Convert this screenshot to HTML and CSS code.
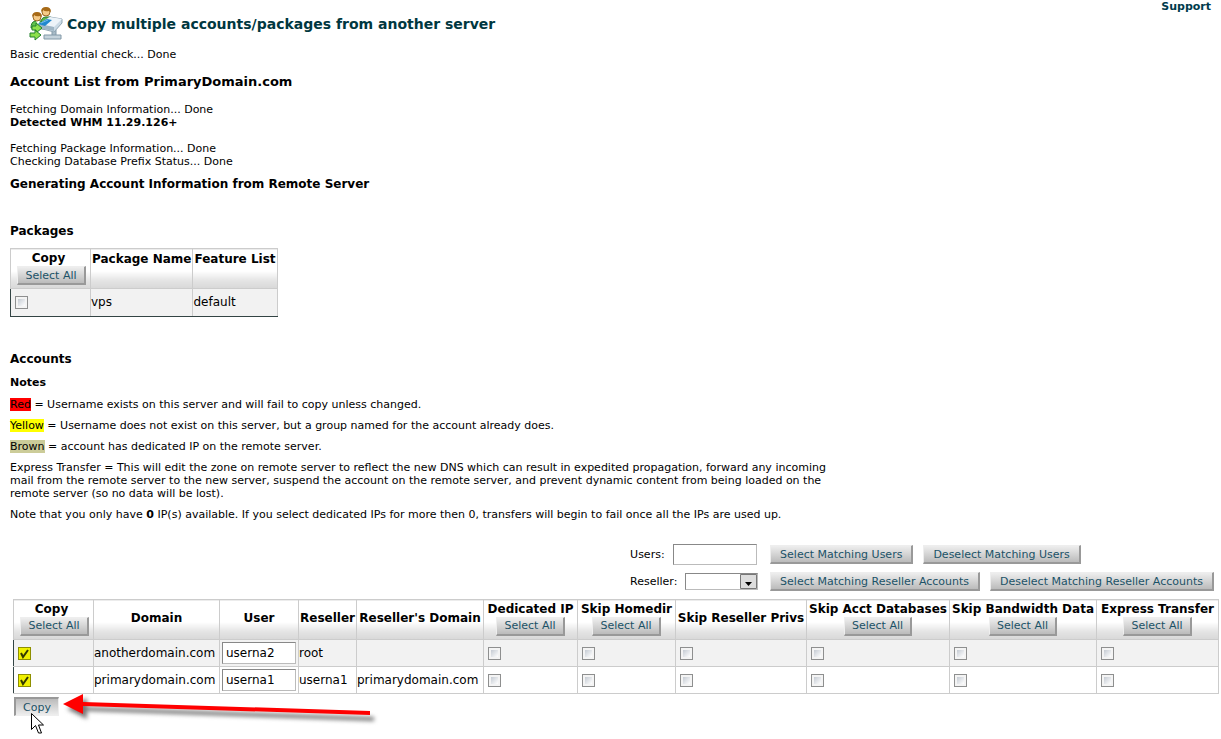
FILE: index.html
```html
<!DOCTYPE html>
<html lang="en">

<head>
    <meta charset="utf-8">
    <title>Copy multiple accounts/packages from another server</title>
    <link rel="stylesheet" href="styles.css">
</head>

<body>
    <div id="header">
        <h1>
            <svg class="logo" width="34" height="34" viewBox="0 0 34 34" aria-hidden="true">
                <path d="M12 16q0-6 5-6h4q5 1 5 7z" fill="#58b947" stroke="#25762a"/>
                <path d="M2 21q0-6 4-7h6q4 1 4 8z" fill="#62c34e" stroke="#25762a"/>
                <path d="M7 14l2 4 2-4z" fill="#fff"/>
                <circle cx="17" cy="5" r="4" fill="#f5ca87" stroke="#9b6925"/>
                <path d="M12 5q0-5 5-5t5 5l-2-1q-4 1-6-1z" fill="#a76a17"/>
                <circle cx="8" cy="10" r="4" fill="#f5ca87" stroke="#9b6925"/>
                <path d="M3 10q0-5 5-5t5 5l-2-1q-4 1-6-1z" fill="#a76a17"/>
                <path d="M23 23h4v6h-4z" fill="#a9bcc8" stroke="#8299a8"/>
                <path d="M15 28h17v4H15z" fill="#c5d3dc" stroke="#8299a8"/>
                <path d="M10 17l11-7 12 2v4l-8 9-15-4z" fill="#cbdbe6" stroke="#91a6b4"/>
                <path d="M10 17l11-7 12 2-8 8z" fill="#edf4f9"/>
                <path d="M10 17l15 3v4l-15-3z" fill="#9fb6c5"/>
                <path d="M9 17l9-5 5 1-7 6z" fill="#2088cf"/>
                <path d="M12 16l7-3" stroke="#75bde9"/>
                <path d="M3 19h4v-3l6 5-6 5v-3H3z" fill="#8de04c" stroke="#23802d"/>
                <path d="M1 26h5v-3l6 5-6 5v-3H1z" fill="#8de04c" stroke="#23802d"/>
            </svg>
            Copy multiple accounts/packages from another server
        </h1>
        <a class="support" href="#">Support</a>
    </div>

    <div class="content">
        <div>Basic credential check... Done</div>
        <h2>Account List from PrimaryDomain.com</h2>
        <p class="log">
            Fetching Domain Information... Done<br>
            <b>Detected WHM 11.29.126+</b><br>
            <br>
            Fetching Package Information... Done<br>
            Checking Database Prefix Status... Done
        </p>
        <h3>Generating Account Information from Remote Server</h3>

        <h3 class="section">Packages</h3>
        <table class="packages">
            <tr>
                <th class="copy">Copy<br><button type="button">Select All</button></th>
                <th>Package Name</th>
                <th>Feature List</th>
            </tr>
            <tr class="odd">
                <td><input type="checkbox" aria-label="Copy vps"></td>
                <td>vps</td>
                <td>default</td>
            </tr>
        </table>

        <h3 class="accounts-title">Accounts</h3>
        <div class="notes">
            <h4>Notes</h4>
            <p><span class="red">Red</span> = Username exists on this server and will fail to copy unless changed.</p>
            <p><span class="yellow">Yellow</span> = Username does not exist on this server, but a group named for the account already does.</p>
            <p><span class="brown">Brown</span> = account has dedicated IP on the remote server.</p>
            <p>Express Transfer = This will edit the zone on remote server to reflect the new DNS which can result in expedited propagation, forward any incoming mail from the remote server to the new server, suspend the account on the remote server, and prevent dynamic content from being loaded on the remote server (so no data will be lost).</p>
            <p>Note that you only have <b>0</b> IP(s) available. If you select dedicated IPs for more then 0, transfers will begin to fail once all the IPs are used up.</p>
        </div>
    </div>

    <form class="accounts-form">
        <div class="filters">
            <div class="filter">
                <div class="field">
                    <label for="users">Users:</label>
                    <input type="text" id="users">
                </div>
                <button type="button">Select Matching Users</button>
                <button type="button">Deselect Matching Users</button>
            </div>
            <div class="filter">
                <div class="field">
                    <label for="reseller">Reseller:</label>
                    <select id="reseller">
                        <option></option>
                    </select>
                </div>
                <button type="button">Select Matching Reseller Accounts</button>
                <button type="button">Deselect Matching Reseller Accounts</button>
            </div>
        </div>

        <table class="accounts">
            <colgroup>
                <col class="c-copy">
                <col class="c-domain">
                <col class="c-user">
                <col class="c-reseller">
                <col class="c-resdomain">
                <col class="c-ip">
                <col class="c-homedir">
                <col class="c-privs">
                <col class="c-databases">
                <col class="c-bandwidth">
                <col class="c-express">
            </colgroup>
            <tr>
                <th class="copy">Copy<br><button type="button">Select All</button></th>
                <th>Domain</th>
                <th>User</th>
                <th>Reseller</th>
                <th>Reseller's Domain</th>
                <th>Dedicated IP<br><button type="button">Select All</button></th>
                <th>Skip Homedir<br><button type="button">Select All</button></th>
                <th>Skip Reseller Privs</th>
                <th>Skip Acct Databases<br><button type="button">Select All</button></th>
                <th>Skip Bandwidth Data<br><button type="button">Select All</button></th>
                <th>Express Transfer<br><button type="button">Select All</button></th>
            </tr>
            <tr class="odd">
                <td><input type="checkbox" aria-label="Copy anotherdomain.com" checked></td>
                <td>anotherdomain.com</td>
                <td><input type="text" aria-label="User for anotherdomain.com" value="userna2"></td>
                <td>root</td>
                <td></td>
                <td><input type="checkbox" aria-label="Dedicated IP"></td>
                <td><input type="checkbox" aria-label="Skip Homedir"></td>
                <td><input type="checkbox" aria-label="Skip Reseller Privs"></td>
                <td><input type="checkbox" aria-label="Skip Acct Databases"></td>
                <td><input type="checkbox" aria-label="Skip Bandwidth Data"></td>
                <td><input type="checkbox" aria-label="Express Transfer"></td>
            </tr>
            <tr>
                <td><input type="checkbox" aria-label="Copy primarydomain.com" checked></td>
                <td>primarydomain.com</td>
                <td><input type="text" aria-label="User for primarydomain.com" value="userna1"></td>
                <td>userna1</td>
                <td>primarydomain.com</td>
                <td><input type="checkbox" aria-label="Dedicated IP"></td>
                <td><input type="checkbox" aria-label="Skip Homedir"></td>
                <td><input type="checkbox" aria-label="Skip Reseller Privs"></td>
                <td><input type="checkbox" aria-label="Skip Acct Databases"></td>
                <td><input type="checkbox" aria-label="Skip Bandwidth Data"></td>
                <td><input type="checkbox" aria-label="Express Transfer"></td>
            </tr>
        </table>

        <div class="submit">
            <button type="submit" class="pressed">Copy</button>
            <svg class="arrow" width="320" height="40" viewBox="0 0 320 40" aria-hidden="true">
                <path d="M3 11l20-11v9l287 10v4L23 13v8z" class="arrow-shadow"/>
                <path d="M3 11L23 1v8l287 9v4L23 13v8z" fill="#f00"/>
            </svg>
            <svg class="cursor" width="13" height="22" viewBox="0 0 13 22" aria-hidden="true">
                <path d="M.5.5v16l4-4 3 7.500h3l-3-8h5z" fill="#fff" stroke="#000"/>
            </svg>
        </div>
    </form>
</body>

</html>
```

FILE: styles.css
```css
body {
    min-height: 100vh;
    margin: 0;
    background-color: #fff;
    color: #000;
    font-family: Verdana, "DejaVu Sans", sans-serif;
    font-size: 11px;
    line-height: 13px;
}

#header {
    display: flex;
    justify-content: space-between;
    padding: 0 10px 0 29px;
}

h1 {
    display: flex;
    align-items: center;
    gap: 4px;
    height: 34px;
    margin: 7px 0;
    color: #003740;
    font-size: 14px;
    line-height: 18px;
}

.support {
    color: #003b4c;
    font-weight: bold;
    text-decoration: none;
}

.content {
    padding: 0 10px;
}

h2 {
    margin: 13px 0;
    font-size: 13px;
    line-height: 16px;
}

h3 {
    margin: 9px 0;
    font-size: 12px;
    line-height: 15px;
}

h4 {
    margin: 9px 0;
    font-size: 11px;
}

p {
    margin: 8px 0;
}

.log {
    margin: 0;
}

.section {
    margin-top: 32px;
}

.accounts-title {
    margin-top: 35px;
}

.notes {
    max-width: 840px;
}

.red {
    background-color: #f00;
}

.yellow {
    background-color: #ff0;
}

.brown {
    background-color: #cc9;
}

/* tables */
table {
    border-collapse: collapse;
    font-size: 12px;
    line-height: 15px;
}

th,
td {
    border: 1px solid #ccc;
    white-space: nowrap;
}

th {
    height: 37px;
    padding: 0 1px 2px;
    background-image: linear-gradient(#fff 55%, #e4e4e4 80%, #d8d8d8);
}

td {
    height: 26px;
    padding: 0;
}

.packages th {
    padding-top: 3px;
    height: 34px;
    vertical-align: top;
}

.copy,
.packages .copy {
    padding-left: 0;
    padding-right: 4px;
}

.packages .copy {
    width: 75px;
    padding-top: 2px;
    height: 35px;
}

.packages td {
    border-bottom-color: #344;
    height: 27px;
}

td:first-child {
    border-left: 1px solid #344;
}

.odd {
    background-color: #f2f2f2;
}

.copy button {
    margin-left: 6px;
}

.accounts {
    width: 100%;
    table-layout: fixed;
}

.c-copy { width: 80px; }
.c-domain { width: 126px; }
.c-user { width: 79px; }
.c-reseller { width: 58px; }
.c-resdomain { width: 127px; }
.c-ip { width: 94px; }
.c-homedir { width: 98px; }
.c-privs { width: 131px; }
.c-databases { width: 143px; }
.c-bandwidth { width: 147px; }
.c-express { width: 122px; }

/* controls */
button {
    height: 19px;
    padding: 0 7px;
    border: 1px solid #eee;
    border-right: 2px solid #999;
    border-bottom: 2px solid #999;
    background-image: linear-gradient(#eee, #bbb);
    color: #1b5267;
    font-family: inherit;
    font-size: 11px;
    line-height: 15px;
    white-space: nowrap;
}

th button {
    display: inline-block;
    vertical-align: top;
}

input[type="text"],
select {
    box-sizing: border-box;
    margin: 0;
    padding: 0 3px;
    border: 1px solid #bbb;
    border-top-color: #888;
    border-left-color: #888;
    border-radius: 0;
    background-color: #fff;
    color: #000;
    font-family: inherit;
    font-size: 12px;
}

td input[type="text"] {
    display: block;
    width: 74px;
    height: 22px;
    margin: 0 2px;
}

input[type="checkbox"] {
    display: block;
    box-sizing: border-box;
    appearance: none;
    width: 13px;
    height: 13px;
    margin: 0 4px;
    border: 1px solid #8e8f8f;
    background: linear-gradient(135deg, #c5cbd3, #fff) content-box, #f4f4f4;
    padding: 2px;
}

input[type="checkbox"]:checked {
    border-color: #8e8f00;
    background: url("data:image/svg+xml,%3Csvg xmlns='http://www.w3.org/2000/svg' viewBox='0 0 11 11'%3E%3Cpath d='M2 5l2 4 5-7' fill='none' stroke='%23343a00' stroke-width='2'/%3E%3C/svg%3E") padding-box, #f0f000;
}

/* accounts form */
.accounts-form {
    margin: 23px 2px 0 13px;
}

.filters {
    display: grid;
    gap: 6px;
    width: fit-content;
    margin-left: auto;
    margin-right: 5px;
    margin-bottom: 7px;
}

.filter {
    display: flex;
    align-items: center;
    gap: 10px;
    min-height: 21px;
}

.filter button {
    padding: 0 9px;
}

.field {
    display: flex;
    align-items: center;
    gap: 8px;
    width: 130px;
}

#users {
    width: 84px;
    height: 21px;
}

#reseller {
    appearance: none;
    width: 73px;
    height: 17px;
    background: url("data:image/svg+xml,%3Csvg xmlns='http://www.w3.org/2000/svg' width='17' height='15'%3E%3Cpath d='M.5.5h16v14H.5z' fill='%23ddd' stroke='%23777'/%3E%3Cpath d='M5 8h7l-3.500 4z'/%3E%3C/svg%3E") right center no-repeat #fff;
}

.submit {
    position: relative;
    margin-top: 3px;
}

.submit .pressed {
    display: block;
    margin-left: 1px;
    border: 1px solid #eee;
    border-top: 2px solid #999;
    border-left: 2px solid #999;
    background-image: linear-gradient(#bbb, #eee);
}

.arrow,
.cursor {
    position: absolute;
    pointer-events: none;
}

.arrow {
    left: 47px;
    top: -4px;
}

.arrow-shadow {
    fill: #777;
    filter: blur(2px);
    transform: translate(4px, 5px);
}

.cursor {
    left: 18px;
    top: 16px;
}
```
